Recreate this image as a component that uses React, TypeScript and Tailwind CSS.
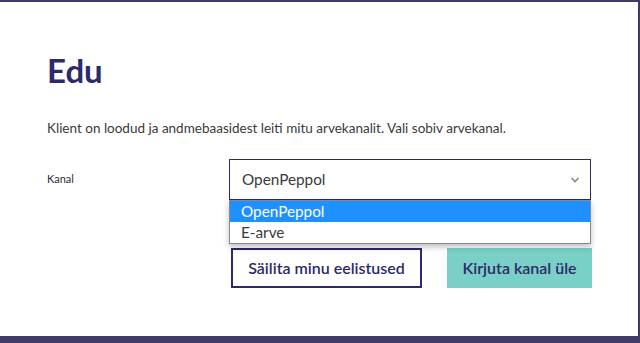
import React from "react";

export default function App() {
  return (
    <div className="w-[640px] h-[343px] bg-[#3f3b69] overflow-hidden" style={{ fontFamily: 'Lato, "Noto Sans", sans-serif' }}>
      <div className="mt-[2px] mr-[2px] h-[334px] bg-white flex flex-col">
        <div className="pl-[47px] pt-[46px]">
          <h1 className="text-[33px] leading-[44px] font-bold text-[#2d2a6b]">Edu</h1>
          <p className="mt-[27px] text-[13.5px] leading-[18px] text-[#3a3a3a]">
            Klient on loodud ja andmebaasidest leiti mitu arvekanalit. Vali sobiv arvekanal.
          </p>
          <div className="mt-[22px] flex items-center">
            <label className="w-[182px] text-[11px] text-[#2b2b3b]">Kanal</label>
            <div className="relative">
              <div className="w-[362px] h-[41px] border border-[#2d2a6b] flex items-center justify-between pl-[12px] pr-[10px] text-[15.3px] text-[#3a3a3a] bg-white">
                <span>OpenPeppol</span>
                <svg width="10" height="6" viewBox="0 0 10 6" fill="none">
                  <path d="M1.5 1l3.5 3.5L8.5 1" stroke="#8a8a8a" strokeWidth="1.6" />
                </svg>
              </div>
              <div className="absolute left-0 top-[41px] w-[362px] border border-[#8a8a8a] bg-white shadow-[0_3px_6px_rgba(0,0,0,0.25)] z-10 text-[15.3px] leading-[21px]">
                <div className="bg-[#1e90ff] text-white pl-[11px]">OpenPeppol</div>
                <div className="text-[#3a3a3a] pl-[11px]">E-arve</div>
              </div>
            </div>
          </div>
          <div className="mt-[48px] ml-[184px] flex gap-[25px]">
            <button className="w-[191px] h-[40px] border-2 border-[#2d2a6b] text-[16px] font-semibold text-[#2d2a6b]">
              Säilita minu eelistused
            </button>
            <button className="w-[145px] h-[40px] bg-[#7acfc6] text-[16px] font-semibold text-[#2d2a6b]">
              Kirjuta kanal üle
            </button>
          </div>
        </div>
      </div>
    </div>
  );
}
